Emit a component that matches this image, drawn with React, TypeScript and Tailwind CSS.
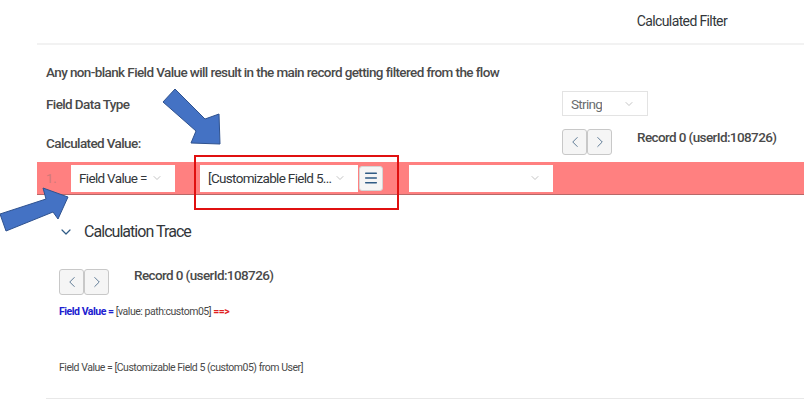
import { ChevronDown, ChevronLeft, ChevronRight, Menu } from 'lucide-react'

const font = { fontFamily: 'Roboto, "Liberation Sans", sans-serif' }

function Select({ value, className }: { value?: string; className: string }) {
  return (
    <div className={`flex items-center justify-between bg-white pl-2 pr-3 text-[13.5px] tracking-[-0.05em] whitespace-nowrap ${className}`}>
      <span className="truncate">{value}</span>
      <ChevronDown className="w-3 h-3 text-[#b0b0b0] shrink-0" strokeWidth={1.5} />
    </div>
  )
}

function Pager() {
  return (
    <div className="flex">
      <button className="w-[25px] h-[26px] flex items-center justify-center bg-[#f5f5f5] border border-[#c8c8c8] rounded-[3px] text-[#5b7893]">
        <ChevronLeft className="w-[18px] h-[18px]" strokeWidth={1.3} />
      </button>
      <button className="w-[25px] h-[26px] flex items-center justify-center bg-[#f5f5f5] border border-[#c8c8c8] rounded-[3px] text-[#5b7893]">
        <ChevronRight className="w-[18px] h-[18px]" strokeWidth={1.3} />
      </button>
    </div>
  )
}

export default function App() {
  return (
    <div className="relative w-[804px] h-[407px] bg-white overflow-hidden text-[#32363a]" style={font}>
      <div className="h-[45px] flex items-center justify-end pr-[77px] ml-[37px] border-b-2 border-[#f2f2f2]">
        <span className="text-[14px] tracking-[-0.045em] text-[#32363a]">Calculated Filter</span>
      </div>

      <div className="pl-[46px] pt-[17px]">
        <p className="text-[13.5px] font-medium tracking-[-0.045em] text-[#4a4a4a] whitespace-nowrap">Any non-blank Field Value will result in the main record getting filtered from the flow</p>

        <div className="flex items-center mt-[9px]">
          <span className="w-[516px] text-[13.5px] font-medium tracking-[-0.045em] text-[#4a4a4a]">Field Data Type</span>
          <Select value="String" className="w-[86px] h-[25px] border border-[#e3e3e3] text-[#6a6d70]" />
        </div>

        <div className="flex items-start mt-[13px]">
          <span className="w-[516px] pt-[4px] text-[13.5px] font-medium tracking-[-0.045em] text-[#4a4a4a]">Calculated Value:</span>
          <Pager />
          <span className="ml-[25px] -mt-[2px] text-[13.5px] font-medium tracking-[-0.045em] text-[#4a4a4a] whitespace-nowrap">Record 0 (userId:108726)</span>
        </div>
      </div>

      <div className="ml-[37px] mt-[7px] h-[33px] bg-[#ff8080] border-b border-[#b86868] flex items-center pl-[9px]">
        <span className="w-[25px] text-[13px] text-[#d07878]">1.</span>
        <Select value="Field Value =" className="w-[104px] h-[27px] text-[#32363a]" />
        <Select value="[Customizable Field 5..." className="ml-[25px] w-[158px] h-[27px] text-[#32363a]" />
        <button className="ml-[1px] w-[24px] h-[25px] flex items-center justify-center bg-[#f5f5f5] border border-[#d5d5d5] rounded-[3px] text-[#2f5b85]">
          <Menu className="w-4 h-4" strokeWidth={2.2} />
        </button>
        <Select className="ml-[26px] w-[144px] h-[27px]" />
      </div>

      <div className="pl-[58px] mt-[25px] flex items-center">
        <ChevronDown className="w-4 h-4 text-[#2f5b85]" strokeWidth={1.8} />
        <span className="ml-[10px] text-[16px] tracking-[-0.06em] text-[#32363a]">Calculation Trace</span>
      </div>

      <div className="pl-[59px] mt-[25px] flex items-start">
        <Pager />
        <span className="ml-[25px] -mt-[4px] text-[13.5px] font-medium tracking-[-0.045em] text-[#4a4a4a] whitespace-nowrap">Record 0 (userId:108726)</span>
      </div>

      <p className="pl-[59px] mt-[9px] text-[10.5px] tracking-[-0.045em] text-[#4a4a4a]">
        <span className="font-bold text-[#2020d0]">Field Value = </span>
        [value: path:custom05] <span className="font-bold text-[#e02020]">==&gt;</span>
      </p>

      <p className="pl-[59px] mt-[40px] text-[10.5px] tracking-[-0.045em] text-[#4a4a4a]">Field Value = [Customizable Field 5 (custom05) from User]</p>

      <div className="absolute left-[46px] right-0 top-[398px] border-t border-[#e8e8e8]" />

      <div className="absolute left-[194px] top-[155px] w-[205px] h-[55px] border-2 border-[#e01010]" />

      <svg className="absolute left-0 top-0 pointer-events-none" width="804" height="407">
        <polygon points="175,89 205,119 219,114 220,144 191,143 196,131 163,102" fill="#4472c4" stroke="#2f528f" strokeWidth="1" />
        <polygon points="0,214 46,199 43,188 68,197 58,219 53,212 6,231" fill="#4472c4" stroke="#2f528f" strokeWidth="1" />
      </svg>
    </div>
  )
}
